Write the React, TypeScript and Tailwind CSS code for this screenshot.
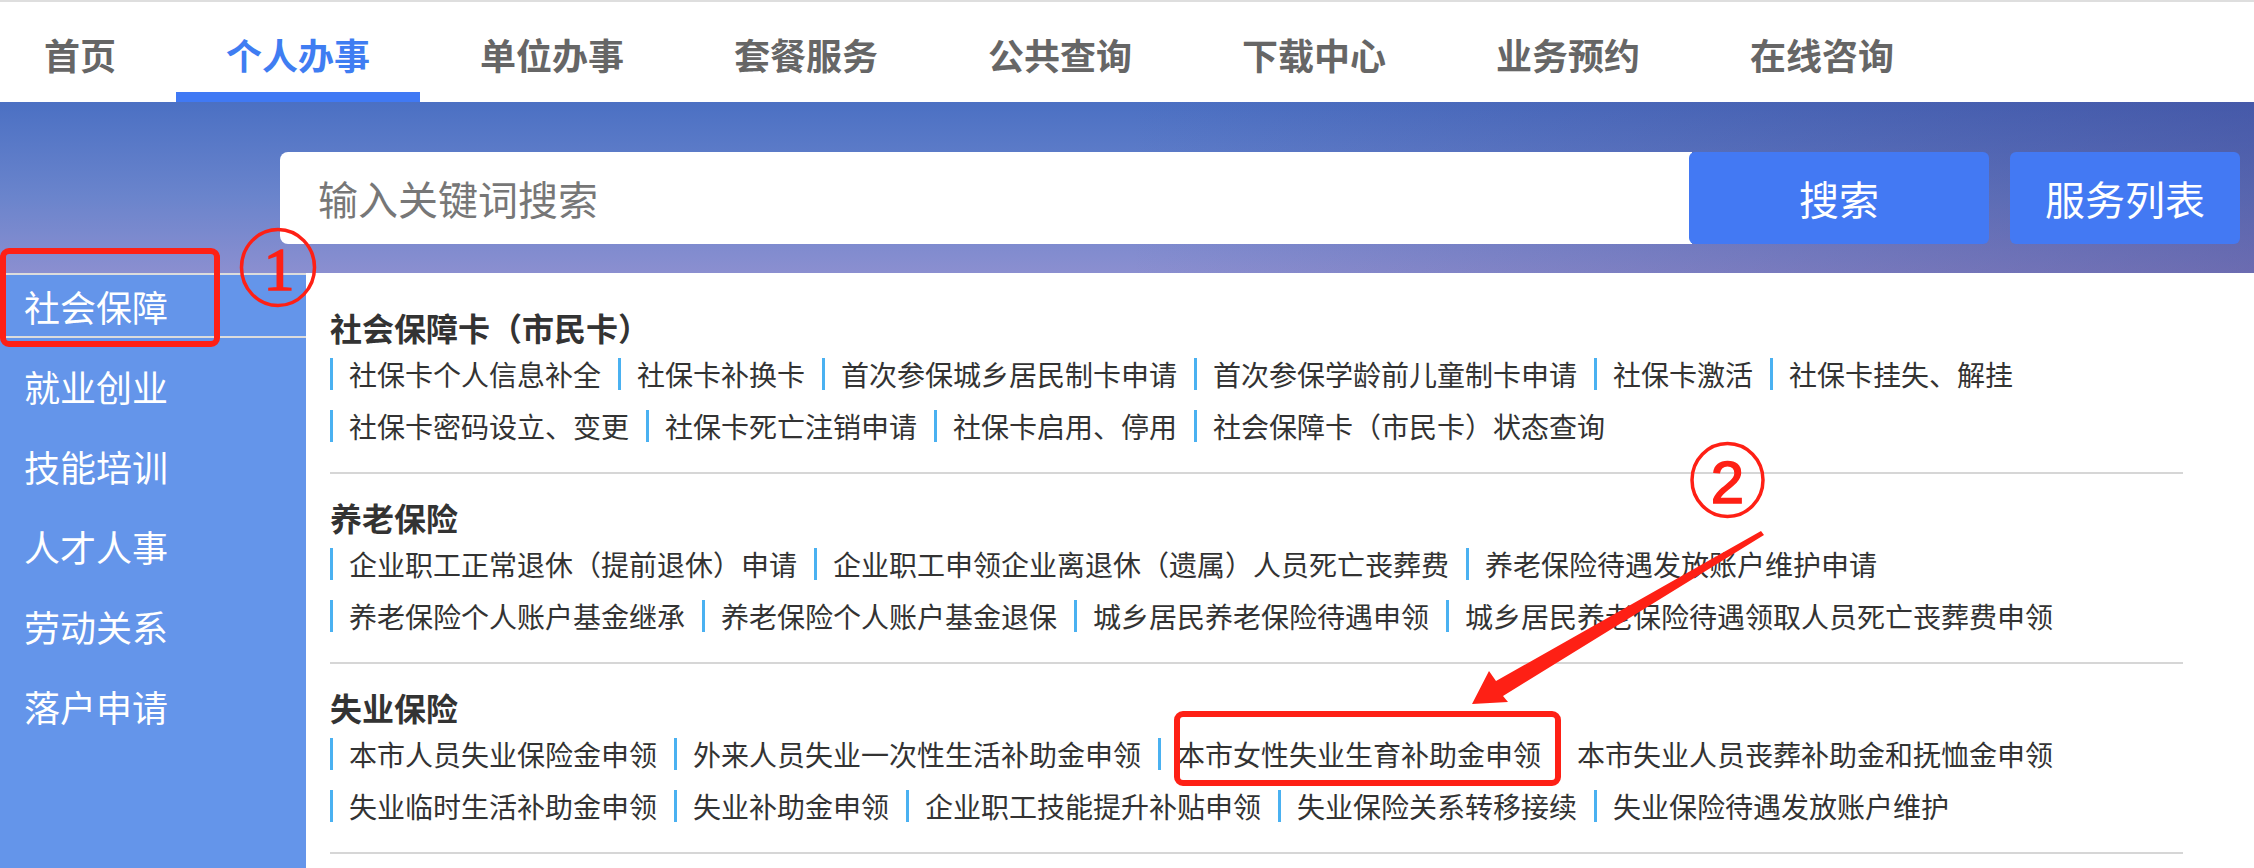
import React from "react";

const nav = ["首页", "个人办事", "单位办事", "套餐服务", "公共查询", "下载中心", "业务预约", "在线咨询"];
const side = ["就业创业", "技能培训", "人才人事", "劳动关系", "落户申请"];

const sections: { title: string; rows: string[][] }[] = [
  {
    title: "社会保障卡（市民卡）",
    rows: [
      ["社保卡个人信息补全", "社保卡补换卡", "首次参保城乡居民制卡申请", "首次参保学龄前儿童制卡申请", "社保卡激活", "社保卡挂失、解挂"],
      ["社保卡密码设立、变更", "社保卡死亡注销申请", "社保卡启用、停用", "社会保障卡（市民卡）状态查询"],
    ],
  },
  {
    title: "养老保险",
    rows: [
      ["企业职工正常退休（提前退休）申请", "企业职工申领企业离退休（遗属）人员死亡丧葬费", "养老保险待遇发放账户维护申请"],
      ["养老保险个人账户基金继承", "养老保险个人账户基金退保", "城乡居民养老保险待遇申领", "城乡居民养老保险待遇领取人员死亡丧葬费申领"],
    ],
  },
  {
    title: "失业保险",
    rows: [
      ["本市人员失业保险金申领", "外来人员失业一次性生活补助金申领", "本市女性失业生育补助金申领", "本市失业人员丧葬补助金和抚恤金申领"],
      ["失业临时生活补助金申领", "失业补助金申领", "企业职工技能提升补贴申领", "失业保险关系转移接续", "失业保险待遇发放账户维护"],
    ],
  },
];

export default function App() {
  return (
    <div className="relative w-[2254px] overflow-hidden bg-white font-['Noto_Sans_CJK_SC','Noto_Sans',sans-serif]">
      <div className="h-[2px] bg-[#dedede]" />
      <nav className="flex h-[100px] items-stretch gap-[110px] bg-white pl-[44px]">
        {nav.map((n, i) => (
          <div key={n} className="relative flex items-center pt-[4px]">
            <span
              className={
                i === 1
                  ? "text-[36px] font-bold leading-none text-[#3f7df2]"
                  : "text-[36px] font-bold leading-none text-[#666666]"
              }
            >
              {n}
            </span>
            {i === 1 && <span className="absolute -left-[50px] -right-[50px] bottom-0 h-[10px] bg-[#4079f4]" />}
          </div>
        ))}
      </nav>

      <div className="flex h-[171px] items-start bg-[linear-gradient(to_right,rgba(50,60,140,0)_50%,rgba(60,55,130,0.4)_100%),linear-gradient(to_bottom,#4b70c3_0%,#6a84cc_55%,#8b8fd0_100%)] pl-[280px] pt-[50px]">
        <div className="flex h-[92px] w-[1412px] items-center rounded-l-[8px] bg-white pl-[38px] text-[40px] text-[#777777]">
          输入关键词搜索
        </div>
        <div className="-ml-[3px] flex h-[92px] w-[300px] items-center justify-center rounded-[6px] bg-[#4379f3] text-[40px] text-white">
          搜索
        </div>
        <div className="ml-[21px] flex h-[92px] w-[230px] items-center justify-center rounded-[6px] bg-[#4379f3] text-[40px] text-white">
          服务列表
        </div>
      </div>

      <div className="flex">
        <aside className="w-[306px] shrink-0 bg-[#6495ea]">
          <div className="flex h-[65px] items-center border-y-2 border-[#dcdcdc] pl-[24px] text-[36px] text-white">
            社会保障
          </div>
          {side.map((s) => (
            <div key={s} className="mt-[15px] flex h-[65px] items-center pl-[24px] text-[36px] text-white">
              {s}
            </div>
          ))}
        </aside>
        <main className="ml-[24px] w-[1853px] pb-[40px] pt-[36px]">
          {sections.map((s, i) => (
            <section
              key={s.title}
              className={i > 0 ? "mt-[25px] border-b-2 border-[#d6d6d6] pb-[30px]" : "border-b-2 border-[#d6d6d6] pb-[30px]"}
            >
              <h3 className="h-[36px] text-[32px] font-bold leading-[36px] text-[#333333]">{s.title}</h3>
              <div className="mt-[13px] flex flex-col gap-[20px]">
                {s.rows.map((r, ri) => (
                  <div key={ri} className="flex gap-[17px]">
                    {r.map((t) => (
                      <span
                        key={t}
                        className="h-[32px] whitespace-nowrap border-l-[3px] border-[#4ab1f1] pl-[16px] text-[28px] leading-[32px] text-[#333333]"
                      >
                        {t}
                      </span>
                    ))}
                  </div>
                ))}
              </div>
            </section>
          ))}
        </main>
      </div>

      <svg
        className="pointer-events-none absolute left-0 top-0"
        width="2254"
        height="868"
        viewBox="0 0 2254 868"
      >
        <rect x="3" y="251" width="214" height="93" rx="6" fill="none" stroke="#fe2015" strokeWidth="6" />
        <ellipse cx="278" cy="267.5" rx="36.5" ry="38" fill="none" stroke="#fe2015" strokeWidth="3.5" />
        <text x="279" y="290" textAnchor="middle" fill="#fe2015" stroke="#fe2015" strokeWidth="1.5" fontSize="62" fontFamily="'Liberation Serif', serif">
          1
        </text>
        <ellipse cx="1727.5" cy="480" rx="35.5" ry="36.5" fill="none" stroke="#fe2015" strokeWidth="3.5" />
        <text x="1727.5" y="503" textAnchor="middle" fill="#fe2015" stroke="#fe2015" strokeWidth="1.5" fontSize="60" fontFamily="'Liberation Sans', sans-serif">
          2
        </text>
        <polygon points="1761,531 1764,535 1503,696 1508,702 1472,704 1489,671 1496,681" fill="#fe2015" />
        <rect x="1177" y="714" width="381" height="69" rx="6" fill="none" stroke="#fe2015" strokeWidth="6" />
      </svg>
    </div>
  );
}
